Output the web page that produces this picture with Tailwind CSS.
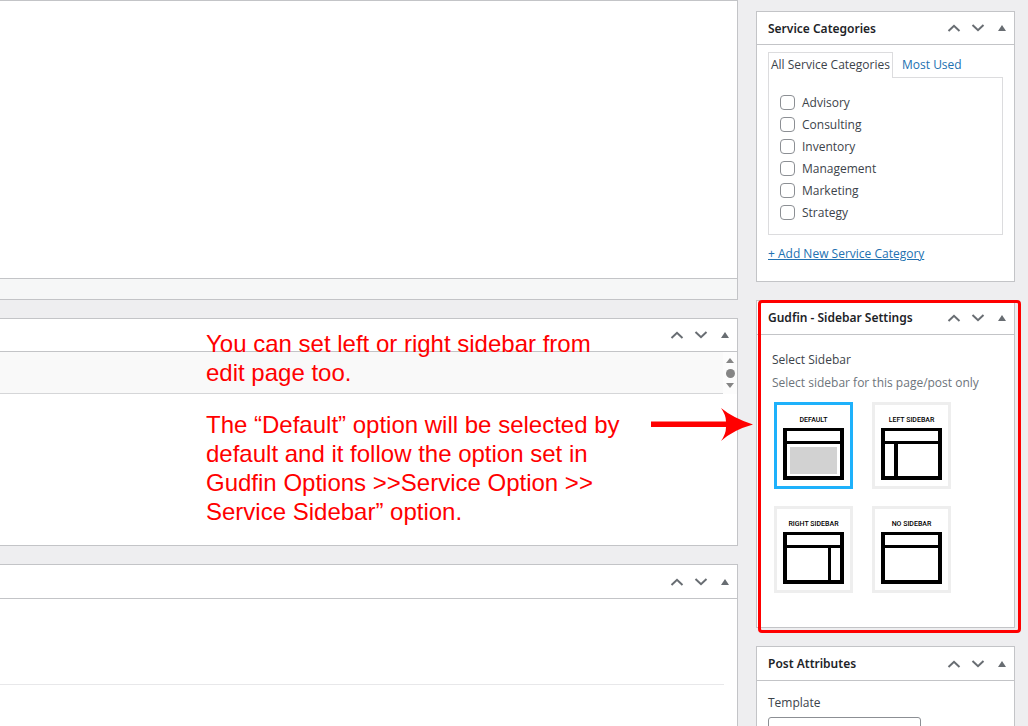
<!DOCTYPE html>
<html lang="en">
<head>
  <meta charset="UTF-8">
  <title>Edit Service</title>
  <script src="https://cdn.jsdelivr.net/npm/@tailwindcss/browser@4"></script>
</head>
<body class="bg-[#eeeef0] font-['Open_Sans','Noto_Sans',sans-serif] text-[12px] leading-[18px] text-[#3c434a]">
  <svg class="hidden">
    <symbol id="up" viewBox="0 0 14 8"><path d="M1.5 7 7 1.8 12.5 7" fill="none" stroke="#686d72" stroke-width="2"/></symbol>
    <symbol id="down" viewBox="0 0 14 8"><path d="M1.5 1 7 6.2 12.5 1" fill="none" stroke="#686d72" stroke-width="2"/></symbol>
    <symbol id="toggle" viewBox="0 0 8 6"><path d="M4 0 8 6H0z" fill="#686d72"/></symbol>
  </svg>

  <div class="relative flex h-screen gap-[18px] overflow-hidden pr-[13px]">

    <!-- Main column -->
    <main class="flex min-w-0 flex-1 flex-col">
      <section class="border-y border-r border-[#c3c4c7] bg-white">
        <div class="h-[277px]"></div>
        <div class="h-[21px] border-t border-[#c3c4c7] bg-[#f6f7f7]"></div>
      </section>

      <section class="mt-[18px] h-[228px] shrink-0 border-y border-r border-[#c3c4c7] bg-white">
        <header class="flex h-[33px] items-center justify-end border-b border-[#c3c4c7]">
          <button type="button" aria-label="Move up" class="flex h-6 w-6 items-center justify-center"><svg class="h-2 w-[14px]"><use href="#up"/></svg></button>
          <button type="button" aria-label="Move down" class="flex h-6 w-6 items-center justify-center"><svg class="h-2 w-[14px]"><use href="#down"/></svg></button>
          <button type="button" aria-label="Toggle panel" class="flex h-6 w-6 items-center justify-center"><svg class="h-[6px] w-2"><use href="#toggle"/></svg></button>
        </header>
        <div class="flex h-[42px]">
          <div class="flex-1 border-b border-[#d5d6d8] bg-[#f9f9f9]"></div>
          <div class="flex w-[14px] flex-col items-center justify-between bg-[#fcfcfc] pt-[6px] pb-[6px]">
            <svg class="h-[5px] w-2" viewBox="0 0 8 5"><path d="M4 0 8 5H0z" fill="#858585"/></svg>
            <span class="h-[9px] w-[9px] rounded-full bg-[#858585]"></span>
            <svg class="h-[5px] w-2" viewBox="0 0 8 5"><path d="M0 0H8L4 5z" fill="#858585"/></svg>
          </div>
        </div>
      </section>

      <section class="mt-[18px] flex-1 border-t border-r border-[#c3c4c7] bg-white">
        <header class="flex h-[34px] items-center justify-end border-b border-[#c3c4c7]">
          <button type="button" aria-label="Move up" class="flex h-6 w-6 items-center justify-center"><svg class="h-2 w-[14px]"><use href="#up"/></svg></button>
          <button type="button" aria-label="Move down" class="flex h-6 w-6 items-center justify-center"><svg class="h-2 w-[14px]"><use href="#down"/></svg></button>
          <button type="button" aria-label="Toggle panel" class="flex h-6 w-6 items-center justify-center"><svg class="h-[6px] w-2"><use href="#toggle"/></svg></button>
        </header>
        <div class="mr-[13px] h-[86px] border-b border-[#e8e8ea]"></div>
      </section>
    </main>

    <!-- Side column -->
    <aside class="flex w-[259px] shrink-0 flex-col gap-[18px] pt-[11px]">
      <section class="h-[271px] shrink-0 border border-[#c3c4c7] bg-white">
        <header class="flex h-[33px] items-center border-b border-[#c3c4c7] pl-[11px]">
          <h2 class="flex-1 pt-px font-['Noto_Sans',sans-serif] font-semibold text-[#1d2327]">Service Categories</h2>
          <button type="button" aria-label="Move up" class="flex h-6 w-6 items-center justify-center"><svg class="h-2 w-[14px]"><use href="#up"/></svg></button>
          <button type="button" aria-label="Move down" class="flex h-6 w-6 items-center justify-center"><svg class="h-2 w-[14px]"><use href="#down"/></svg></button>
          <button type="button" aria-label="Toggle panel" class="flex h-6 w-6 items-center justify-center"><svg class="h-[6px] w-2"><use href="#toggle"/></svg></button>
        </header>
        <div class="px-[11px] pt-[7px]">
          <div class="flex">
            <a href="#all" class="z-10 -mb-px h-[26px] w-[125px] border border-b-0 border-[#dcdcde] bg-white pt-[3px] text-center whitespace-nowrap">All Service Categories</a>
            <a href="#used" class="pt-1 pl-[9px] text-[#2271b1]">Most Used</a>
          </div>
          <div class="flex h-[158px] flex-col gap-1 border border-[#dcdcde] px-[11px] pt-4">
            <label class="flex items-start gap-[7px]"><input type="checkbox" class="mt-px h-[15px] w-[15px] appearance-none rounded-[4px] border border-[#8c8f94] bg-white">Advisory</label>
            <label class="flex items-start gap-[7px]"><input type="checkbox" class="mt-px h-[15px] w-[15px] appearance-none rounded-[4px] border border-[#8c8f94] bg-white">Consulting</label>
            <label class="flex items-start gap-[7px]"><input type="checkbox" class="mt-px h-[15px] w-[15px] appearance-none rounded-[4px] border border-[#8c8f94] bg-white">Inventory</label>
            <label class="flex items-start gap-[7px]"><input type="checkbox" class="mt-px h-[15px] w-[15px] appearance-none rounded-[4px] border border-[#8c8f94] bg-white">Management</label>
            <label class="flex items-start gap-[7px]"><input type="checkbox" class="mt-px h-[15px] w-[15px] appearance-none rounded-[4px] border border-[#8c8f94] bg-white">Marketing</label>
            <label class="flex items-start gap-[7px]"><input type="checkbox" class="mt-px h-[15px] w-[15px] appearance-none rounded-[4px] border border-[#8c8f94] bg-white">Strategy</label>
          </div>
          <a href="#add" class="mt-[10px] inline-block font-medium whitespace-nowrap text-[#2271b1] underline">+ Add New Service Category</a>
        </div>
      </section>

      <section class="relative h-[328px] shrink-0 border border-[#c3c4c7] bg-white">
        <header class="flex h-[34px] items-center border-b border-[#c3c4c7] pl-[11px]">
          <h2 class="flex-1 pt-px font-['Noto_Sans',sans-serif] font-semibold text-[#1d2327]">Gudfin - Sidebar Settings</h2>
          <button type="button" aria-label="Move up" class="flex h-6 w-6 items-center justify-center"><svg class="h-2 w-[14px]"><use href="#up"/></svg></button>
          <button type="button" aria-label="Move down" class="flex h-6 w-6 items-center justify-center"><svg class="h-2 w-[14px]"><use href="#down"/></svg></button>
          <button type="button" aria-label="Toggle panel" class="flex h-6 w-6 items-center justify-center"><svg class="h-[6px] w-2"><use href="#toggle"/></svg></button>
        </header>
        <div class="pt-4 pl-[15px]">
          <h3 class="font-medium">Select Sidebar</h3>
          <p class="mt-[5px] text-[#6d747b]">Select sidebar for this page/post only</p>
          <div class="mt-[10px] ml-[2px] grid grid-cols-[79px_79px] gap-x-[19px] gap-y-[17px] font-['Roboto',sans-serif] text-[7px] leading-[10px] font-medium text-black">
            <label class="relative flex h-[87px] flex-col items-center border-[3px] border-[#1eb1fb] pt-[10px] whitespace-nowrap">
              <input type="radio" name="sidebar" class="sr-only" checked>DEFAULT
              <svg class="mt-[3px] h-[52px] w-[61px]" viewBox="0 0 61 52"><path d="M0 0h61v52H0zM4 3v10h53V3zM4 16v32h53V16z" fill-rule="evenodd"/><path d="M7 19h47v27H7z" fill="#d2d2d2"/></svg>
            </label>
            <label class="relative flex h-[87px] flex-col items-center border-[3px] border-[#eee] pt-[10px] whitespace-nowrap">
              <input type="radio" name="sidebar" class="sr-only">LEFT SIDEBAR
              <svg class="mt-[3px] h-[52px] w-[61px]" viewBox="0 0 61 52"><path d="M0 0h61v52H0zM4 3v10h53V3zM4 16v32h9V16zM17 16v32h40V16z" fill-rule="evenodd"/></svg>
            </label>
            <label class="relative flex h-[87px] flex-col items-center border-[3px] border-[#eee] pt-[10px] whitespace-nowrap">
              <input type="radio" name="sidebar" class="sr-only">RIGHT SIDEBAR
              <svg class="mt-[3px] h-[52px] w-[61px]" viewBox="0 0 61 52"><path d="M0 0h61v52H0zM4 3v10h53V3zM4 16v32h41V16zM48 16v32h9V16z" fill-rule="evenodd"/></svg>
            </label>
            <label class="relative flex h-[87px] flex-col items-center border-[3px] border-[#eee] pt-[10px] whitespace-nowrap">
              <input type="radio" name="sidebar" class="sr-only">NO SIDEBAR
              <svg class="mt-[3px] h-[52px] w-[61px]" viewBox="0 0 61 52"><path d="M0 0h61v52H0zM4 3v10h53V3zM4 16v32h53V16z" fill-rule="evenodd"/></svg>
            </label>
          </div>
        </div>
        <!-- Highlight frame -->
        <div class="pointer-events-none absolute -top-px -right-[7px] -bottom-[6px] left-px rounded-[4px] border-[3px] border-[#f00]"></div>
      </section>

      <section class="flex-1 border border-b-0 border-[#c3c4c7] bg-white">
        <header class="flex h-[34px] items-center border-b border-[#c3c4c7] pl-[11px]">
          <h2 class="flex-1 pt-px font-['Noto_Sans',sans-serif] font-semibold text-[#1d2327]">Post Attributes</h2>
          <button type="button" aria-label="Move up" class="flex h-6 w-6 items-center justify-center"><svg class="h-2 w-[14px]"><use href="#up"/></svg></button>
          <button type="button" aria-label="Move down" class="flex h-6 w-6 items-center justify-center"><svg class="h-2 w-[14px]"><use href="#down"/></svg></button>
          <button type="button" aria-label="Toggle panel" class="flex h-6 w-6 items-center justify-center"><svg class="h-[6px] w-2"><use href="#toggle"/></svg></button>
        </header>
        <div class="px-[11px] pt-[13px]">
          <label for="template" class="block font-medium">Template</label>
          <select id="template" class="mt-[5px] h-[30px] w-[153px] appearance-none rounded-[3px] border border-[#8c8f94] bg-white"></select>
        </div>
      </section>
    </aside>

    <!-- Notes over the page -->
    <div class="absolute top-[329px] left-[206px] font-['Liberation_Sans',Arial,sans-serif] text-[24px] leading-[29px] whitespace-nowrap text-[#f00]">
      <p>You can set left or right sidebar from<br>edit page too.</p>
      <p class="mt-[23px]">The “Default” option will be selected by<br>default and it follow the option set in<br>Gudfin Options &gt;&gt;Service Option &gt;&gt;<br>Service Sidebar” option.</p>
    </div>
    <svg class="absolute top-[408px] left-[651px] h-[33px] w-[102px]" viewBox="0 0 102 33"><path d="M0 13.500H75Q75 7 70 0Q82 10 102 16.500Q82 22 70 33Q75 26 75 19H0z" fill="#f00"/></svg>
  </div>
</body>
</html>
